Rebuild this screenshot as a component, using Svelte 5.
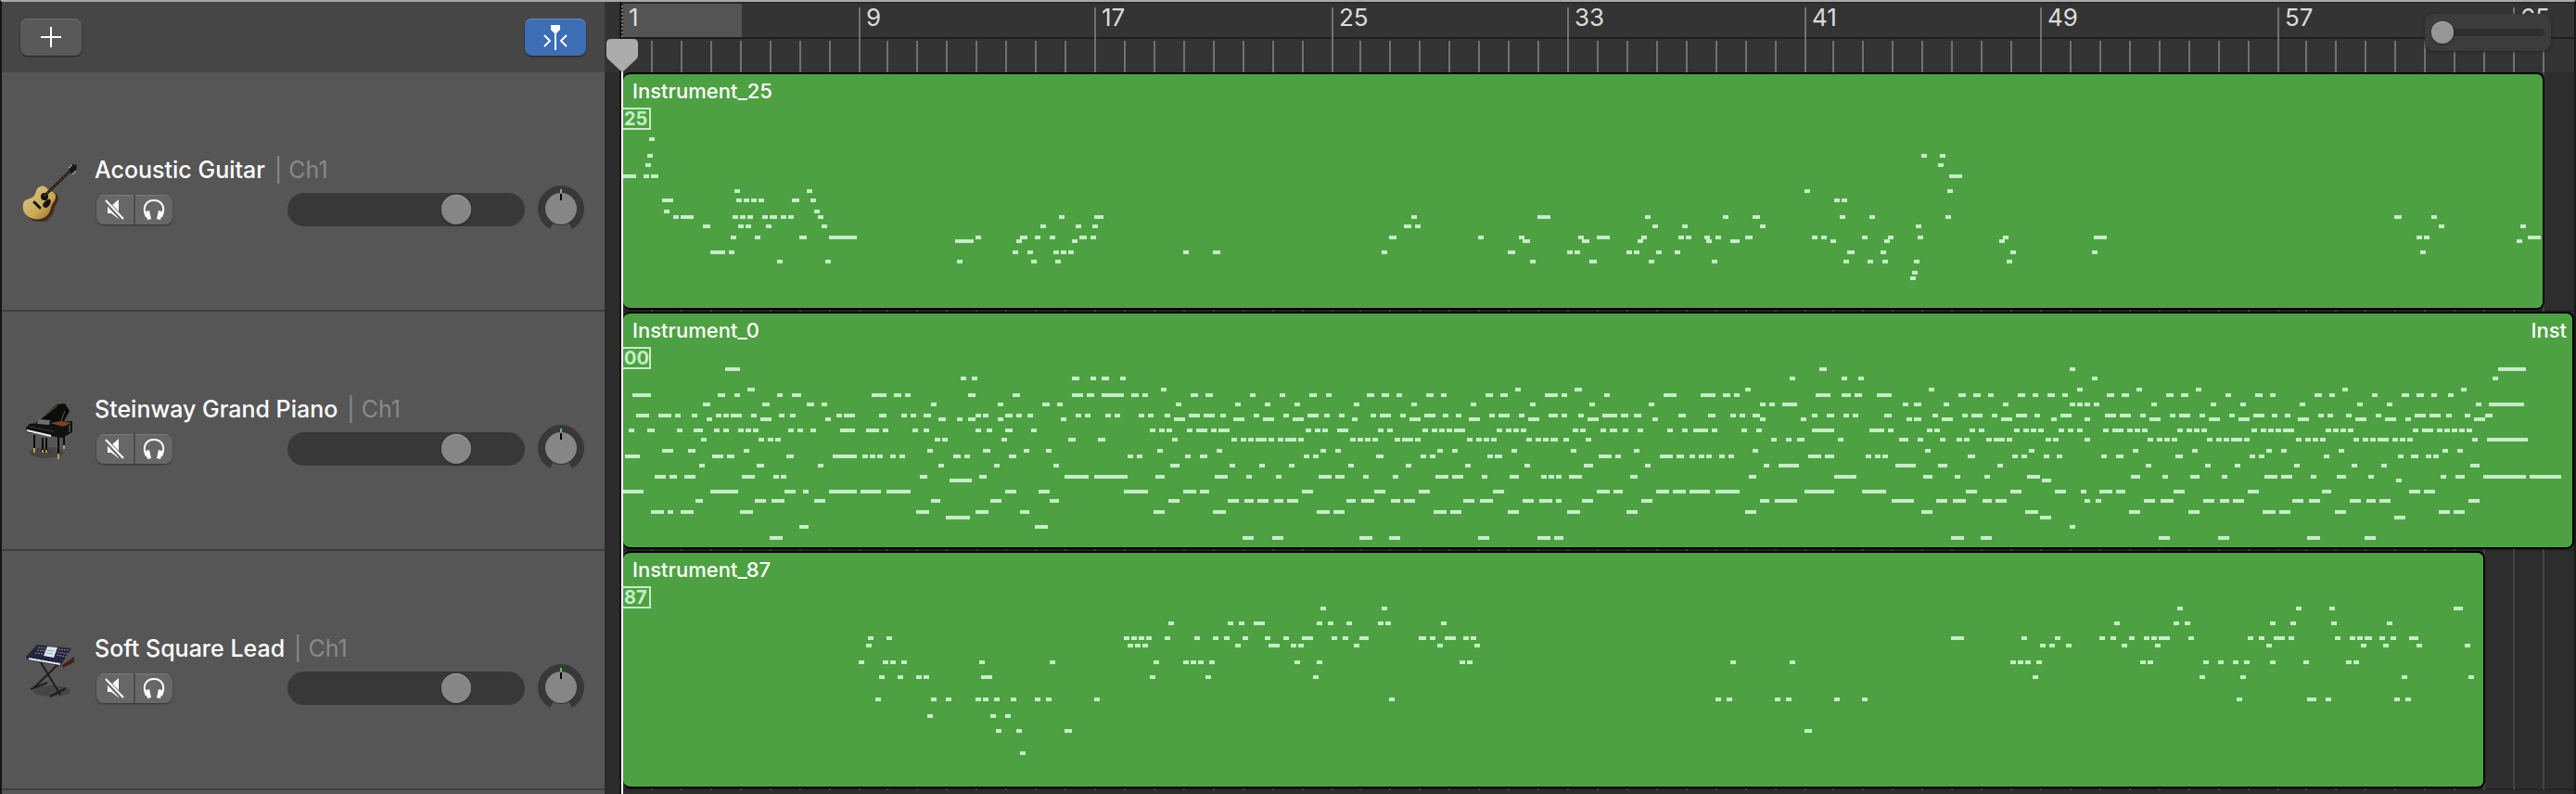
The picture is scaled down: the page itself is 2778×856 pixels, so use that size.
<script>
  const BAR_WIDTH = 31.875;
  const barStart = (n) => 2 * Math.floor((1 + BAR_WIDTH * n) / 2);
  const bars = Array.from({ length: 66 }, (_, n) => ({
    number: n + 1,
    major: n % 8 === 0,
    width: barStart(n + 1) - barStart(n)
  }));

  // A phrase lists its notes per pitch row as "start" or "start-end" ticks.
  function phrase(at, ticksPerPixel, rows) {
    const snap = (tick) => 2 * Math.round((at + tick / ticksPerPixel) / 2);
    return Object.entries(rows).flatMap(([y, list]) =>
      list.split(' ').map((note) => {
        const [start, end] = note.split('-').map(Number);
        const x = snap(start);
        return { x, y: Number(y), width: end === undefined ? 6 : Math.max(6, snap(end) - x) };
      })
    );
  }

  const guitarNotes = [
    ...phrase(-12, 2.8, {
      68: '112', 86: '106', 96: '101', 108: '34-73 95 118-140',
      124: '370 588', 134: '151-185 375 398 420 442 543-566 599', 146: '157 610',
      152: '185 207-246 364 386 409 454 476-498 510 532 622 1350 1456-1484',
      162: '274-297 381 403 465 633 1294 1400 1450',
      174: '358 431 566-588 655-739 1098 1232-1254 1277 1322 1411-1434 1445',
      178: '1036-1092 1221 1389', 190: '297-342 353 1210 1254 1333 1355 1378',
      200: '498 644 1042 1266 1338'
    }),
    ...phrase(328, 1.782, {
      152: '930 1172-1197 1379 1529', 162: '916-930 937 1393 1450',
      174: '887-902 1058 1137 1251 1286-1311 1372 1443 1457 1493 1515',
      178: '1144-1158 1258-1272 1365 1497 1543-1561',
      190: '492 550-563 873 1115-1130 1229 1244 1343 1358 1401 1436',
      200: '1158 1272-1286 1386 1507'
    }),
    ...phrase(1168, 3, {
      86: '696 756', 96: '750', 108: '786-828', 124: '318 780', 134: '414 438',
      152: '54 150-174 432 528 774', 162: '174 678',
      174: '30 126-150 342 372 504 588 684 960 1254-1296',
      178: '0 78-108 402 576 948', 190: '456-480 564 984 1248',
      200: '18 444 522 570 672 972', 212: '666', 218: '660'
    }),
    ...phrase(1628, 3, {
      152: '846-870 966', 162: '990 1254', 174: '918 942 1278-1320', 178: '1242', 190: '930'
    })
  ];

  const pianoNotes = [
    ...phrase(-12, 2.9037, {
      58: '354-401', 68: '1092 1127 1440-1463 1498 1533-1556', 80: '424-447',
      86: '64-122 331-354 383 517 563-592 813-859 883-906 918 1115-1138 1254-1278 1440-1475 1487-1510 1533-1597',
      96: '285-308 470-494 610-633 656 999 1208 1347-1371 1394',
      108: '75-116 145-186 197 250 325 348 372-407 436 523 558 703 726-761 836-859 906 935 976-999 1138 1161 1231-1254 1266 1301 1452 1481 1545',
      112: '296 465-499 668 1022-1045 1080 1115-1138 1208 1405',
      124: '52 110-134 203 256-285 319 348 395 418 441 552 581 621 714-761 796-836 848 941 976 1138 1173 1231-1254 1312',
      134: '279 459 488 511 1010 1034 1220 1429-1452 1522-1545',
      146: '157-192 238-261 412 987 1161-1185 1289 1359',
      152: '41-87 314-348 360-383 546-569 691-767 784 807 830 871 900 1069-1092 1103 1243-1266',
      162: '273 453-476 645 1022 1196 1382',
      174: '134-168 180-203 226-261 407-447 505 528 964-987 1150-1173 1417-1493 1510-1615',
      178: '1057-1127',
      190: '35-99 308-395 540-575 598 679-767 778-842 859-935 1231-1266 1336-1371',
      200: '261-285 447-482 499-540 633-668 999-1028 1185-1220 1371-1400',
      212: '122-163 174 215-256 401-441 952-993 1138-1179 1278-1307',
      218: '1045-1121', 228: '587-616 1324-1365', 240: '494-534'
    }),
    ...phrase(518, 2.9037, {
      68: '0 52', 80: '180 1289 1475-1498',
      86: '41-64 87-110 122 273-296 319-343 459 552 645-668 697 825-848 871-894 918 1010-1034 1057 1196-1220 1243-1266 1382-1423 1434',
      96: '226 412 505 598 784 964 1150 1336 1522',
      108: '6 35 110 139 192 267-302 314-348 366 470 563 639-674 691 738 836 865-900 929 1005-1040 1063 1103 1208 1237-1272 1301 1394-1423 1434 1487 1562',
      112: '221-256 407-441 499-534 592-627 778 958-993 1144-1179 1330-1365 1516-1551',
      124: '145 174 197 261 290-325 337 360-395 633 662 685 732-767 859 889 999 1028 1051 1075 1098-1132 1231 1260 1283 1307 1469 1493 1556',
      134: '215 401 430 453 476-511 517 546 569-604 610 772 796 819 842 912 935-970 976 1138 1167 1190 1214 1324 1353 1376 1400-1423 1440 1510',
      146: '168 354 679 726 1045 1092 1278 1463',
      152: '75 105 256 302-325 627 656 854-877 993 1022 1202 1225-1249 1551',
      162: '209-238 395 488 581 767 947 1132 1318 1504-1533',
      174: '163-192 348-389 447 540 674-714 726-755 813 906 1040-1080 1092-1127 1185 1272-1301 1371 1394 1417 1458-1498',
      190: '64-139 250-290 302-331 621-656 848-883 987-1022 1220-1254 1545-1585',
      200: '203-238 389-424 441-470 482-517 534-563 575-610 761-790 807-848 900-929 941-976 1127-1161 1179-1220 1312-1347 1365-1405 1417 1498-1533',
      212: '157-192 343-383 668-709 720-755 1034-1074 1086-1121 1266-1301 1452-1493',
      240: '436-470 528-563 801-842 894-929 1173-1208 1359-1400 1411-1440'
    }),
    ...phrase(1048, 2.9037, {
      58: '703-726 1487', 68: '610 772 825 1556', 80: '470 1045 1510',
      86: '29 215-256 331-377 401-424 436 691-738 772-801 813-836 883-929 1138-1161 1185-1208 1231 1324-1347 1371 1417-1440 1463',
      96: '168 517 546 587-633 964 999-1022 1092 1278 1487 1510 1533',
      108: '23-70 81-105 122-145 261-285 354-377 424 453 494-517 679 726-749 778 807 906-929 1057 1150 1179-1214 1243 1318-1353 1376 1458-1493',
      112: '180 517 645 976 999-1022 1086-1121 1272-1307 1429 1533',
      124: '17 46-70 87 134 226 273 308-354 366 459 505 679-749 859-906 918 1040 1063 1173 1202 1312 1342 1365 1388 1452 1481 1510',
      134: '552 598 633-656 761 952-981 1010 1080 1132 1156 1225 1249-1283 1289 1411 1434 1533',
      146: '122 494 1034 1359',
      152: '12-52 64 203-244 256-279 296 325 348 389 418 668-709 720-749 848 877 900 1167-1190 1307 1336 1405 1446',
      162: '157 528 575-639 941-1005 1074-1103 1260',
      174: '110-134 482-505 749-819 1028-1057 1127 1220 1353-1394', 178: '1400-1429',
      190: '6-46 58-87 192-232 244-285 296-360 377-453 656-749 836-912 1161-1196 1301-1336 1440-1475 1522',
      200: '145-180 517-546 563-633 929-999 1069-1103 1121-1161 1214-1243 1254-1289 1533',
      212: '99-134 470-505 1022-1057 1347-1388', 218: '1394-1429', 228: '1487',
      240: '1115-1156 1208-1243'
    }),
    ...phrase(1566, 2.9037, {
      58: '1324-1411', 68: '52 1307', 80: '6 192 377 836-854 1208',
      86: '99-122 145-168 285-308 331-354 470 563-587 610 749-772 796 929 1022-1045 1069-1092 1115 1167',
      96: '58 238 424 517 703 883 976 1254 1295-1405',
      108: '93-128 139-174 203 296 325-360 389 482 558-592 616 656 761 790 848 941 1063-1098 1109-1144 1161 1220 1283-1307',
      112: '232-267 418-453 511-546 697-732 877-912 970-1005 1034 1249-1283',
      124: '87 116-151 163 186 209 319 348 372 395 552 581 604 627 650-685 784 807 830 854 1057 1086-1121 1132 1156 1179 1202 1225',
      134: '226 256 279 302 412 441 465 488-523 528 691 720 743 767 871 900 923 947-981 993 1016 1040 1243 1289-1417',
      146: '180 366 598 645 825 1150 1196',
      152: '81 128-151 314-337 546 575 778 1010 1051-1074 1098 1121',
      162: '221 407 499 685 865 958 1237-1266',
      174: '174-203 273 360-389 459 592-633 645-679 738 819-848 918 1144 1191-1220 1278-1411 1423-1522',
      178: '1005',
      190: '75-116 128-157 308-343 540-575 772-801 1045-1080 1092-1127',
      200: '64 215-250 267-308 401-436 453-482 494-528 679-714 732-767 859-894 912-941 952-987 1231-1266',
      212: '168-203 354-389 587-627 639-674 813-848 1138-1173 1185-1220',
      218: '999-1034', 240: '261-296 447-482 726-767 906-941'
    })
  ];

  const leadNotes = [
    ...phrase(228, 2.1778, {
      58: '1141 1285', 74: '784 923 950 984-1010 1132 1159 1202 1276 1294 1424',
      90: '78 122 679 697 714 732 775 845 889 915 958 1010 1054 1098-1124 1167 1193 1233-1254 1372-1389 1398 1433-1459 1477 1494',
      98: '74 688 706 723 941 1019-1045 1071 1089 1220 1416 1503',
      116: '57 113 131 157 340 505 749 819 836 854 880 1080 1132 1468 1485',
      132: '105 148 192 209 344-370 740 871 1124',
      156: '96 226-240 261 331 348 375 414 470 497 610 1302',
      174: '218 366 401', 190: '379 427 540-558', 214: '436'
    }),
    ...phrase(1128, 1.6033, {
      58: '879 1084 1142 1356-1372', 74: '770 872 891 1039 1074 1145 1241',
      90: '487-510 609 667 744 763 795 821 834 848-867 898 1000 1020 1046-1065 1071 1151 1177 1190 1203-1216 1228 1247 1280-1296',
      98: '641 657 686 782 841 1033 1196 1235 1292 1376',
      116: '106 208 590 603 616 635 814 827 923 949 975 994 1039 1097 1170 1183',
      132: '628 917 988 1267 1382',
      156: '80 99 183 202 285 333 981 1103-1119 1135 1254 1273', 190: '234-247'
    })
  ];

  const tracks = [
    { name: 'Acoustic Guitar', channel: 'Ch1', icon: 'guitar', clip: 'Instrument_25', program: '25', width: 2072, notes: guitarNotes },
    { name: 'Steinway Grand Piano', channel: 'Ch1', icon: 'piano', clip: 'Instrument_0', next: 'Inst', program: '00', width: 2104, notes: pianoNotes },
    { name: 'Soft Square Lead', channel: 'Ch1', icon: 'synth', clip: 'Instrument_87', program: '87', width: 2008, notes: leadNotes }
  ];
</script>

<main class="app">
  <aside class="tracks">
    <header class="toolbar">
      <button class="tool" aria-label="Add track">
        <svg width="22" height="22" viewBox="0 0 22 22"><path d="M11 0v22M0 11h22" stroke="#fff" stroke-width="2" /></svg>
      </button>
      <button class="tool active" aria-label="Catch playhead">
        <svg width="26" height="28" viewBox="0 0 26 28" fill="none">
          <path d="M8 1h10v5l-4 4h-2l-4-4z" fill="#fff" />
          <path d="M13 8v20" stroke="#fff" stroke-width="2" />
          <path d="M1 12l6 6-6 6M25 12l-6 6 6 6" stroke="#fff" stroke-width="2" />
        </svg>
      </button>
    </header>

    {#each tracks as track}
      <section class="track">
        {#if track.icon === 'guitar'}
          <svg class="instrument" viewBox="0 0 60 68">
            <defs>
              <linearGradient id="wood" x1="0" y1="0" x2="1" y2="1">
                <stop offset="0" stop-color="#dfcb8c" /><stop offset=".6" stop-color="#c9a958" /><stop offset="1" stop-color="#8f6527" />
              </linearGradient>
            </defs>
            <ellipse cx="19" cy="61" rx="10" ry="2" fill="#333" opacity=".6" />
            <path d="M21 25C26 23 28 29 34 31C39 33 39 39 35 44C32 49 34 54 28 58C22 63 14 62 8 59C2 56 0 50 1 44C2 37 12 40 15 33C16 29 17 26 21 25z" fill="#4a2716" transform="translate(1 1)" />
            <path d="M20 25C25 23 27 29 33 31C37 33 37 38 33 43C30 48 31 53 26 57C20 62 12 61 7 58C2 55 0 50 1 44C2 37 11 40 14 33C15 29 16 26 20 25z" fill="url(#wood)" />
            <circle cx="24" cy="36" r="4" fill="#16120e" />
            <path d="M26 40c4-3 6 0 4 4s-5 5-7 3 0-5 3-7z" fill="#17120e" />
            <path d="M13 42l6 6" stroke="#17120e" stroke-width="3" stroke-linecap="round" />
            <path d="M23 36L53 7" stroke="#241a15" stroke-width="3" />
            <path d="M24 35L53 7" stroke="#756456" stroke-width="1" stroke-dasharray="2 2" />
            <path d="M50 7l4-6 5 1-1 5-5 4z" fill="#171515" />
            <path d="M50 4l2 1M52 2l2 1M56 9l2 1M54 11l2 1" stroke="#ccc" stroke-width="1" />
          </svg>
        {:else if track.icon === 'piano'}
          <svg class="instrument" viewBox="0 0 60 68">
            <ellipse cx="26" cy="54" rx="18" ry="6" fill="#333" opacity=".5" />
            <path d="M39 37v21M13 35v16M45 34v14M22 38v14M26 38v14M20 52h8" stroke="#0c0c0c" stroke-width="2" />
            <path d="M39 55v6M13 49v5M45 46v4M22 51v3M26 51v3" stroke="#c49a45" stroke-width="2" />
            <path d="M14 22L37 2l9-1 5 8-8 15z" fill="#0e0d0d" />
            <path d="M15 21L38 3" stroke="#a0692d" stroke-width="1" />
            <path d="M46 9l-5 13" stroke="#60554a" stroke-width="1" />
            <path d="M8 23l22-2 24-1v12l-11 6-38-6-1-5z" fill="#111" />
            <path d="M30 22l12-2 11 2-9 4z" fill="#7b421e" />
            <path d="M18 18l12 1-1 5-13-1z" fill="#68727b" />
            <path d="M5 30l26 6" stroke="#f2f2f2" stroke-width="2" />
            <path d="M8 26l26 5" stroke="#393939" stroke-width="1" />
            <path d="M51 24v8" stroke="#777" stroke-width="1" />
          </svg>
        {:else}
          <svg class="instrument" viewBox="0 0 60 68">
            <ellipse cx="32" cy="53" rx="20" ry="6" fill="#3c3c3c" opacity=".6" />
            <path d="M20 22l21 35M39 24L12 50M9 51l18-7M30 59l17-9" stroke="#1d1d1d" stroke-width="2" fill="none" />
            <path d="M43 25l13-9v6l-12 6z" fill="#481f19" />
            <path d="M16 3l37 4-12 19-36-7-1-3z" fill="#222540" />
            <path d="M17 6l9 1M16 9l9 1M14 12l9 1M39 8l11 1M38 11l11 2M37 14l10 2" stroke="#a28a73" stroke-width="1" stroke-dasharray="2 1" />
            <path d="M27 5l11 1-4 11-11-2z" fill="#dce8ec" />
            <path d="M27 9l7 1M26 12l7 1" stroke="#93a8b0" stroke-width="1" />
            <path d="M7 18l34 6" stroke="#f1f1f1" stroke-width="2" />
            <path d="M8 17l33 6" stroke="#222" stroke-width="1" stroke-dasharray="1 3" />
          </svg>
        {/if}
        <div class="details">
          <h2 class="name">{track.name}<span class="channel">| {track.channel}</span></h2>
          <div class="controls">
            <div class="pair">
              <button aria-label="Mute {track.name}">
                <svg width="24" height="24" viewBox="0 0 24 24">
                  <path d="M4 8h4l8-7v21l-8-6H4z" fill="#fff" />
                  <path d="M2 3l19 20" stroke="#676767" stroke-width="5" />
                  <path d="M2 2l19 20" stroke="#fff" stroke-width="2" />
                </svg>
              </button>
              <button aria-label="Solo {track.name}">
                <svg width="24" height="24" viewBox="0 0 24 24" fill="none">
                  <path d="M4 20C-1 10 3 2 12 2s13 8 8 18" stroke="#fff" stroke-width="2" />
                  <path d="M3 14l4-1 2 9-4 1z" fill="#fff" /><path d="M21 14l-4-1-2 9 4 1z" fill="#fff" />
                </svg>
              </button>
            </div>
            <input class="volume" type="range" min="0" max="220" value="164" aria-label="Volume {track.name}" />
            <label class="pan">
              <svg width="50" height="52" viewBox="0 0 50 52">
                <path d="M13 47A25 25 0 1 1 37 47L33 40H17z" fill="#383838" />
                <circle cx="25" cy="26" r="17" fill="#303030" />
                <circle cx="25" cy="25" r="17" fill="#868686" />
                <path d="M25 4v4" stroke="#62c462" stroke-width="2" />
                <path d="M25 9v7" stroke="#050505" stroke-width="2" />
              </svg>
              <input type="range" min="-64" max="63" value="0" aria-label="Pan {track.name}" />
            </label>
          </div>
        </div>
      </section>
    {/each}
  </aside>

  <div class="gutter"></div>

  <div class="timeline">
    <div class="ruler">
      <div class="cycle"></div>
      {#each bars as bar}
        <div class="bar" class:major={bar.major} style:width="{bar.width}px">
          {#if bar.major}<span>{bar.number}</span>{/if}
        </div>
      {/each}
    </div>

    {#each tracks as track}
      <div class="lane">
        <div class="grid">
          {#each bars as bar}<i style:width="{bar.width}px"></i>{/each}
        </div>
        <article class="clip" style:width="{track.width}px">
          <div class="titles">
            <span>{track.clip}</span>
            {#if track.next}<span>{track.next}</span>{/if}
          </div>
          <span class="program">{track.program}</span>
          <svg class="notes" aria-hidden="true">
            {#each track.notes as note}
              <rect x={note.x} y={note.y} width={note.width} height="4" />
            {/each}
          </svg>
        </article>
      </div>
    {/each}

    <div class="zoom"><input type="range" min="0" max="100" value="0" aria-label="Zoom" /></div>
    <div class="playhead">
      <svg width="34" height="36" viewBox="0 0 34 36"><path d="M5 0h24q5 0 5 5v13q0 2-2 4L17 36 2 22q-2-2-2-4V5q0-5 5-5z" fill="#acacac" /></svg>
    </div>
  </div>
</main>

<style>
  :global(body) { margin: 0; background: #2d2d2d; }

  .app {
    display: grid;
    grid-template-columns: 650px 18px minmax(0, 1fr);
    box-sizing: border-box;
    min-height: 100vh;
    overflow: hidden;
    border-top: 2px solid #a8a8a8;
    border-left: 2px solid #15131d;
    border-right: 2px solid #191919;
    background: #2d2d2d;
    font-family: Inter, "Liberation Sans", sans-serif;
    color: #fff;
  }

  button { padding: 0; border: 0; cursor: pointer; }
  input { margin: 0; }

  .tracks { background: #565656; }

  .toolbar {
    display: flex;
    align-items: center;
    justify-content: space-between;
    box-sizing: border-box;
    height: 76px;
    padding: 0 20px;
    background: #464646;
  }

  .tool {
    display: grid;
    place-items: center;
    width: 66px;
    height: 40px;
    border-radius: 8px;
    background: #595959;
    box-shadow: inset 0 1px #707070, 0 1px 2px #222;
  }
  .tool.active { background: #3c6db5; box-shadow: inset 0 1px #6590cc, 0 1px 2px #222; }

  .track {
    display: flex;
    align-items: center;
    gap: 18px;
    box-sizing: border-box;
    height: 258px;
    padding: 8px 22px 0;
    border-bottom: 2px solid #3f3f3f;
  }
  .instrument { flex: none; width: 60px; height: 68px; }
  .details { flex: 1; display: grid; gap: 2px; }

  .name {
    margin: 0;
    font-size: 25px;
    font-weight: 500;
    line-height: 30px;
    white-space: nowrap;
  }
  .channel { margin-left: 10px; color: #898989; font-weight: 400; }

  .controls { display: flex; align-items: center; padding-left: 2px; }

  .pair {
    display: flex;
    gap: 2px;
    height: 32px;
    border-radius: 8px;
    overflow: hidden;
    background: #4b4b4b;
    box-shadow: 0 1px 2px #333;
  }
  .pair button {
    display: grid;
    place-items: center;
    width: 40px;
    background: #676767;
    box-shadow: inset 0 1px #7b7b7b;
  }

  .volume {
    appearance: none;
    box-sizing: border-box;
    width: 256px;
    height: 36px;
    margin-left: auto;
    padding: 0 2px;
    border-radius: 18px;
    background: #383838;
  }
  .volume::-webkit-slider-thumb {
    appearance: none;
    width: 32px;
    height: 32px;
    border-radius: 50%;
    background: #868686;
    box-shadow: inset 0 1px #a0a0a0, 0 1px 2px #222;
  }

  .pan { position: relative; display: block; width: 50px; height: 52px; margin-left: 14px; }
  .pan input { position: absolute; inset: 0; width: 100%; height: 100%; opacity: 0; }

  .gutter {
    box-sizing: border-box;
    border-right: 2px solid #161616;
    background: linear-gradient(#323232 76px, #2c2c2c 76px);
  }

  .timeline { position: relative; }

  .ruler {
    position: relative;
    display: flex;
    height: 76px;
    overflow: hidden;
    background: linear-gradient(#2b2b2b 2px, #343434 2px, #343434 38px, #1d1d1d 38px, #1d1d1d 40px, #343434 40px);
  }
  .cycle { position: absolute; left: 2px; top: 2px; width: 128px; height: 36px; background: #545454; }

  .bar {
    position: relative;
    flex: none;
    box-sizing: border-box;
    margin-top: 42px;
    border-left: 2px solid #717171;
  }
  .bar.major { margin-top: 6px; }
  .bar span {
    display: block;
    padding-left: 6px;
    color: #dcdcdc;
    font-size: 26px;
    line-height: 22px;
  }

  .lane {
    position: relative;
    box-sizing: border-box;
    height: 258px;
    padding-left: 2px;
    background: linear-gradient(transparent 256px, #242424 256px);
  }
  .grid { position: absolute; inset: 0; display: flex; overflow: hidden; }
  .grid i { flex: none; box-sizing: border-box; border-left: 2px solid #424242; }

  .clip {
    position: relative;
    box-sizing: border-box;
    height: 256px;
    border: 2px solid #000;
    border-left: 0;
    border-radius: 8px;
    overflow: hidden;
    background: #4da142;
  }
  .titles {
    display: flex;
    justify-content: space-between;
    padding: 4px 6px 0 10px;
    font-size: 22px;
    font-weight: 500;
    line-height: 28px;
  }
  .program {
    display: block;
    box-sizing: border-box;
    width: 30px;
    height: 24px;
    margin-top: 4px;
    padding-left: 1px;
    border: 2px solid #c5eec6;
    border-left: 0;
    color: #c5eec6;
    font-size: 20px;
    font-weight: 700;
    line-height: 20px;
  }
  .notes {
    position: absolute;
    inset: 0;
    width: 100%;
    height: 100%;
    fill: #c5eec6;
    shape-rendering: crispEdges;
  }

  .zoom {
    position: absolute;
    top: 13px;
    right: 25px;
    display: grid;
    align-items: center;
    box-sizing: border-box;
    width: 136px;
    height: 40px;
    padding: 0 7px;
    border-radius: 10px;
    background: #3c3c3c;
    box-shadow: 0 1px 3px #222;
  }
  .zoom input {
    appearance: none;
    width: 100%;
    height: 8px;
    border-radius: 4px;
    background: #2e2e2e;
  }
  .zoom input::-webkit-slider-thumb {
    appearance: none;
    width: 24px;
    height: 24px;
    border-radius: 50%;
    background: #969696;
    box-shadow: inset 0 1px #b0b0b0, 0 1px 2px #222;
  }

  .playhead {
    position: absolute;
    z-index: 1;
    top: 2px;
    bottom: 0;
    left: 0;
    width: 2px;
    background: linear-gradient(transparent 44px, #fff 44px);
  }
  .playhead::before {
    content: "";
    position: absolute;
    inset: 0 0 auto;
    height: 38px;
    background: repeating-linear-gradient(#222 0 2px, #777 2px 4px);
  }
  .playhead svg { position: absolute; top: 38px; left: -16px; z-index: -1; }
</style>
